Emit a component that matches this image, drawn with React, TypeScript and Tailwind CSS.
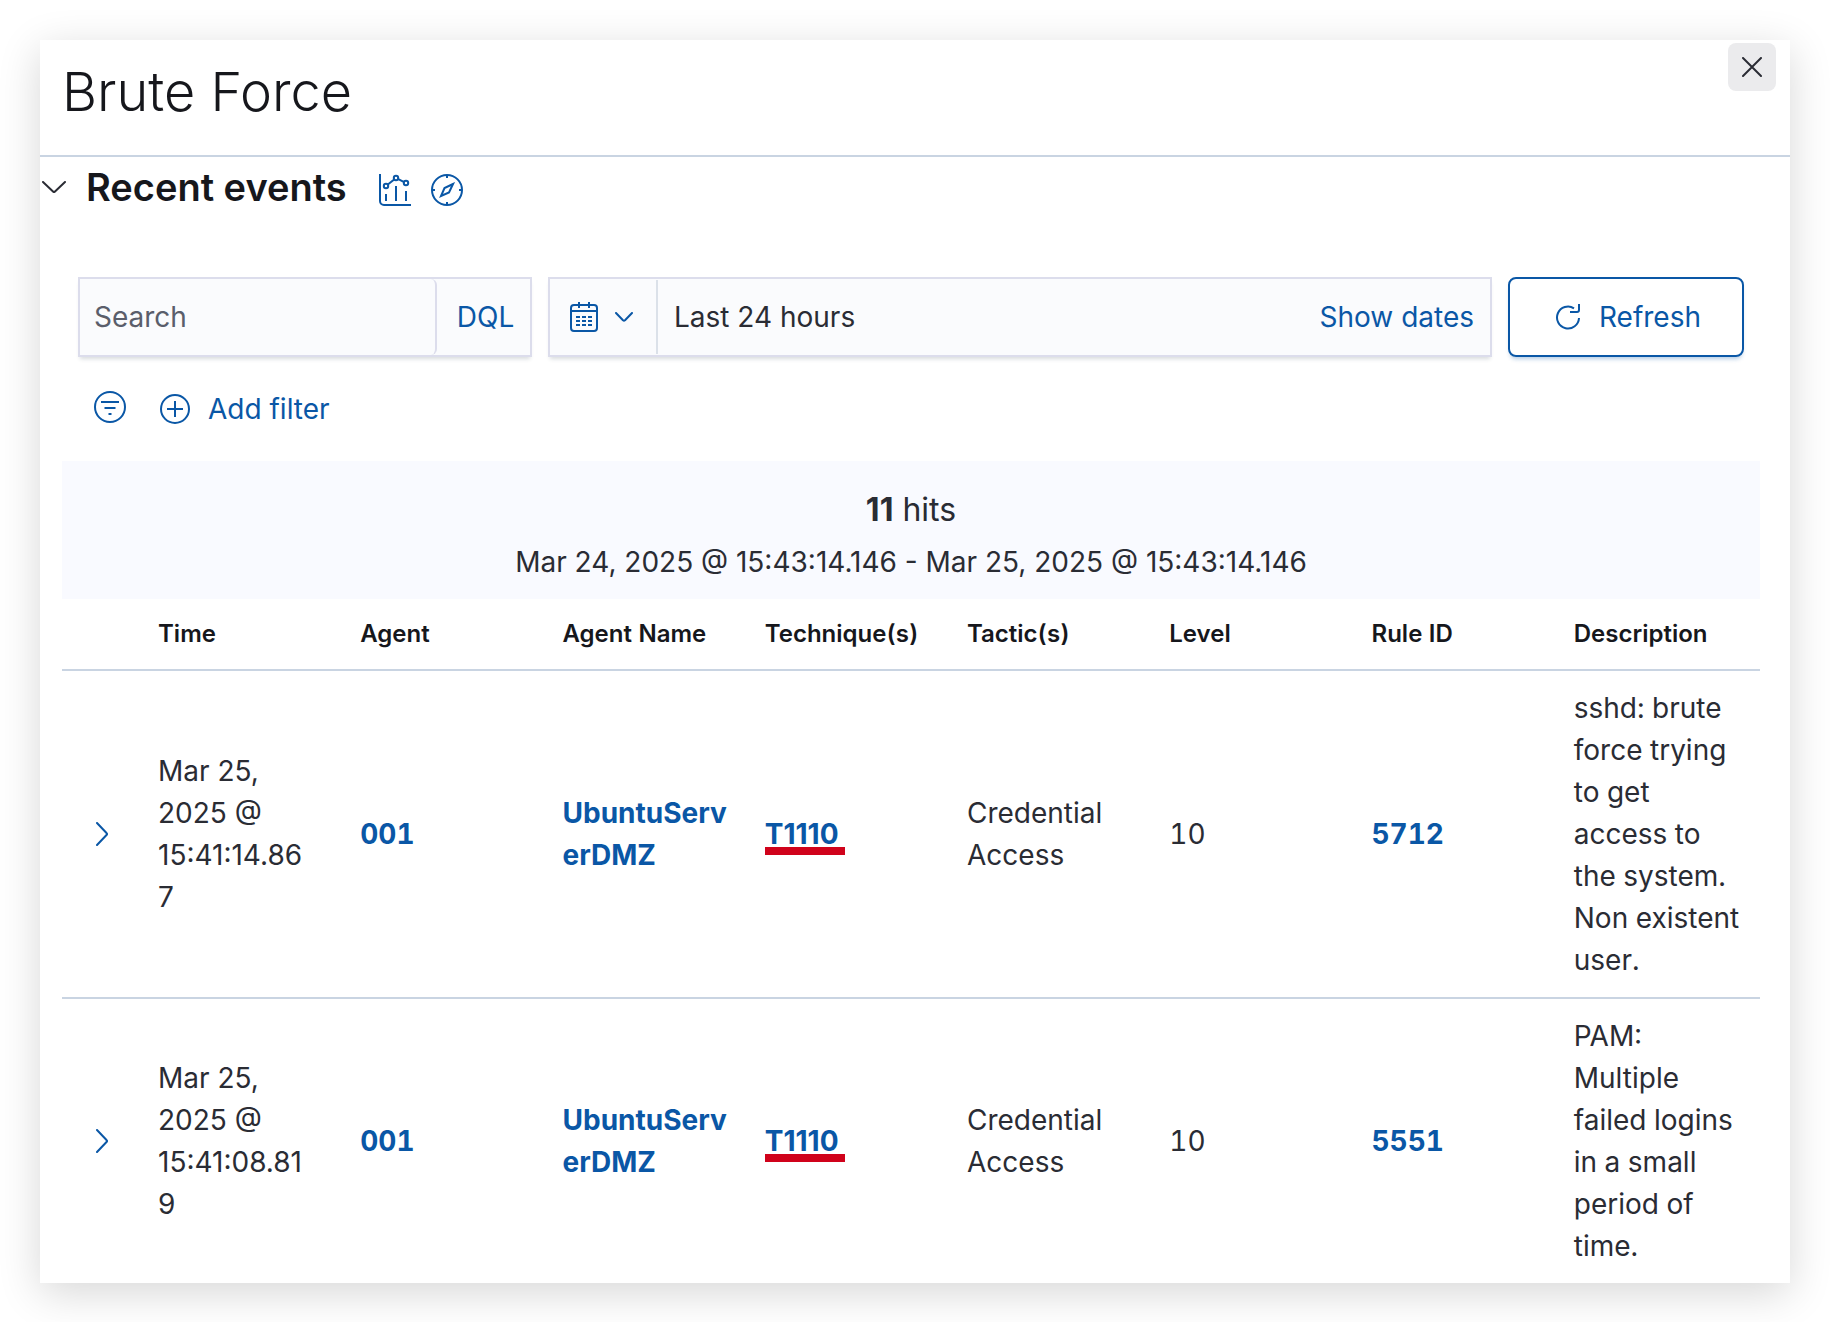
import React from "react";

type IconProps = { className?: string };

const VisualizeIcon = ({ className }: IconProps) => (
  <svg className={className} viewBox="0 0 32 32" fill="none" stroke="currentColor" strokeWidth="2" aria-hidden="true">
    <path d="M1 0v27a4 4 0 0 0 4 4h27" />
    <path d="M7 20v7M17 12v15M27 17v10" />
    <circle cx="7" cy="12" r="2.200" />
    <circle cx="17" cy="4" r="2.200" />
    <circle cx="27" cy="9" r="2.200" />
    <path d="M8.500 10.800l7-5.600M18.800 4.900l6.400 3.200" />
  </svg>
);

const CompassIcon = ({ className }: IconProps) => (
  <svg className={className} viewBox="0 0 32 32" fill="none" stroke="currentColor" strokeWidth="2" aria-hidden="true">
    <circle cx="16" cy="16" r="15" />
    <path d="M16 1v3M16 28v3M1 16h3M28 16h3" />
    <path d="M22 10l-8.500 4L10 22l8-3.500z" />
  </svg>
);

const CalendarIcon = ({ className }: IconProps) => (
  <svg className={className} viewBox="0 0 32 32" fill="none" stroke="currentColor" strokeWidth="2" aria-hidden="true">
    <rect x="3" y="4" width="26" height="26" rx="3" />
    <path d="M3 10h26M11 1v6M21 1v6" />
    <path d="M8 16h4M14 16h4M20 16h4M8 20h4M14 20h4M20 20h4M8 24h4M14 24h4M20 24h4" />
  </svg>
);

const ChevronIcon = ({ className }: IconProps) => (
  <svg className={className} viewBox="0 0 24 12" fill="none" stroke="currentColor" strokeWidth="2" strokeLinecap="round" strokeLinejoin="round" aria-hidden="true">
    <path d="M1 1l10 9.500q1 1 2 0L23 1" />
  </svg>
);

const SmallChevronIcon = ({ className }: IconProps) => (
  <svg className={className} viewBox="0 0 18 10" fill="none" stroke="currentColor" strokeWidth="2" strokeLinecap="round" strokeLinejoin="round" aria-hidden="true">
    <path d="M1 1l7 7.300q1 .8 2 0L17 1" />
  </svg>
);

const RowArrowIcon = ({ className }: IconProps) => (
  <svg className={className} viewBox="0 0 12 24" fill="none" stroke="currentColor" strokeWidth="2" strokeLinecap="round" strokeLinejoin="round" aria-hidden="true">
    <path d="M1 1l9.500 10q1 1 0 2L1 23" />
  </svg>
);

const RefreshIcon = ({ className }: IconProps) => (
  <svg className={className} viewBox="0 0 26 28" fill="none" stroke="currentColor" strokeWidth="2" aria-hidden="true">
    <path d="M19 5.300A11 11 0 1 0 24 15" />
    <path d="M24 1v6a2 2 0 0 1-2 2h-7" />
  </svg>
);

const FilterIcon = ({ className }: IconProps) => (
  <svg className={className} viewBox="0 0 32 32" fill="none" stroke="currentColor" strokeWidth="2" aria-hidden="true">
    <circle cx="16" cy="16" r="15" />
    <path d="M7 11h18M10.500 17h11M14.500 23h3" />
  </svg>
);

const PlusIcon = ({ className }: IconProps) => (
  <svg className={className} viewBox="0 0 30 30" fill="none" stroke="currentColor" strokeWidth="2" aria-hidden="true">
    <circle cx="15" cy="15" r="14" />
    <path d="M15 7v16M7 15h16" />
  </svg>
);

const CloseIcon = ({ className }: IconProps) => (
  <svg className={className} viewBox="0 0 20 20" fill="none" stroke="currentColor" strokeWidth="2" strokeLinecap="round" aria-hidden="true">
    <path d="M1 1l18 18M19 1L1 19" />
  </svg>
);

const columns = ["Time", "Agent", "Agent Name", "Technique(s)", "Tactic(s)", "Level", "Rule ID", "Description"];

const events = [
  {
    time: "Mar 25, 2025 @ 15:41:14.867",
    agent: "001",
    agentName: "UbuntuServerDMZ",
    technique: "T1110",
    tactic: "Credential Access",
    level: 10,
    rule: "5712",
    description: "sshd: brute force trying to get access to the system. Non existent user.",
  },
  {
    time: "Mar 25, 2025 @ 15:41:08.819",
    agent: "001",
    agentName: "UbuntuServerDMZ",
    technique: "T1110",
    tactic: "Credential Access",
    level: 10,
    rule: "5551",
    description: "PAM: Multiple failed logins in a small period of time.",
  },
];

const linkClass = "font-bold text-[#0a57a6]";

export default function App() {
  return (
    <div className="min-h-screen bg-white p-10 font-['Inter',sans-serif] text-[28px] leading-[42px] text-[#2a2c34]">
      <main className="bg-white shadow-[0_10px_40px_rgba(0,0,0,0.16)]">
        <header className="flex items-start justify-between border-b-2 border-[#c9d4e2] pr-3.5 pl-[22px]">
          <h1 className="pt-4 pb-7 text-[54px] leading-[71px] font-light text-[#16171c]">Brute Force</h1>
          <button type="button" aria-label="Close" className="mt-[3px] flex size-12 items-center justify-center rounded-lg bg-[#ebebed]">
            <CloseIcon className="size-5" />
          </button>
        </header>

        <section>
          <div className="flex h-[60px] items-center pl-0.5">
            <button type="button" aria-label="Collapse recent events" className="w-6">
              <ChevronIcon className="h-3 w-6" />
            </button>
            <h2 className="ml-5 text-[38px] leading-[60px] font-semibold text-[#16171c]">Recent events</h2>
            <button type="button" aria-label="Open in visualize" className="mt-1.5 ml-8 text-[#0a57a6]">
              <VisualizeIcon className="size-8" />
            </button>
            <button type="button" aria-label="Open in discover" className="mt-1.5 ml-5 text-[#0a57a6]">
              <CompassIcon className="size-8" />
            </button>
          </div>

          <div className="mt-[60px] flex h-20 gap-4 pr-[46px] pl-[38px]">
            <div className="flex w-[454px] border-2 border-[#dcddec] bg-[#fafbfd] shadow-[0_4px_4px_-2px_rgba(60,80,90,0.2)]">
              <input
                type="text"
                aria-label="Search"
                placeholder="Search"
                className="min-w-0 flex-1 rounded-r-md border-r-2 border-[#dcddec] px-3.5 outline-none placeholder:text-[#5a5e6b]"
              />
              <button type="button" className="w-[93px] pl-1 text-[#0a57a6]">DQL</button>
            </div>
            <div className="flex min-w-0 flex-1 border-2 border-[#dcddec] bg-[#fafbfd] shadow-[0_4px_4px_-2px_rgba(60,80,90,0.2)]">
              <button type="button" aria-label="Date quick select" className="my-px flex w-[108px] items-center gap-[15px] border-r-2 border-[#dbe1e9] pl-[18px] text-[#0a57a6]">
                <CalendarIcon className="size-8" />
                <SmallChevronIcon className="h-2.5 w-[18px]" />
              </button>
              <button type="button" className="flex flex-1 items-center justify-between px-4">
                <span>Last 24 hours</span>
                <span className="text-[#0a57a6]">Show dates</span>
              </button>
            </div>
            <button type="button" className="flex w-[236px] items-center justify-center gap-[18px] rounded-lg border-2 border-[#0a57a6] pl-1 text-[#0a57a6] shadow-[0_4px_4px_-2px_rgba(10,87,166,0.3)]">
              <RefreshIcon className="h-7 w-[26px]" />
              Refresh
            </button>
          </div>

          <div className="flex h-[104px] items-center gap-[34px] pl-[54px] text-[#0a57a6]">
            <button type="button" aria-label="Filter options" className="pb-1">
              <FilterIcon className="size-8" />
            </button>
            <button type="button" className="flex items-center gap-[18px]">
              <PlusIcon className="size-[30px]" />
              Add filter
            </button>
          </div>

          <div className="mr-[30px] ml-[22px]">
            <div className="flex h-[138px] flex-col items-center gap-2.5 bg-[#f9faff] pt-7">
              <p className="text-[32px]"><strong>11</strong> hits</p>
              <p>Mar 24, 2025 @ 15:43:14.146 - Mar 25, 2025 @ 15:43:14.146</p>
            </div>
            <table className="w-full table-fixed border-collapse tabular-nums">
              <thead>
                <tr className="h-[71px] border-b-2 border-[#c9d4e2] text-left text-2xl text-[#16171c]">
                  <td className="w-20" />
                  {columns.map((name) => (
                    <th key={name} scope="col" className="px-4 font-semibold whitespace-nowrap">{name}</th>
                  ))}
                </tr>
              </thead>
              <tbody>
                {events.map((event) => (
                  <tr key={event.rule} className="border-[#c9d4e2] not-last:border-b-2">
                    <td className="pl-[34px]">
                      <button type="button" aria-label="Expand row" className="block text-[#0a57a6]">
                        <RowArrowIcon className="h-6 w-3" />
                      </button>
                    </td>
                    <td className="py-4 pr-8 pl-4 proportional-nums wrap-anywhere">{event.time}</td>
                    <td className="p-4"><a href="#agent" className={linkClass}>{event.agent}</a></td>
                    <td className="p-4 wrap-anywhere"><a href="#agent-name" className={linkClass}>{event.agentName}</a></td>
                    <td className="p-4">
                      <span className="relative inline-block align-top">
                        <a href="#technique" className="font-bold text-[#0a57a6] proportional-nums">{event.technique}</a>
                        <span className="absolute -right-1.5 bottom-0 left-0 h-2 bg-[#d0021b]" />
                      </span>
                    </td>
                    <td className="p-4">{event.tactic}</td>
                    <td className="p-4">{event.level}</td>
                    <td className="p-4"><a href="#rule" className={linkClass}>{event.rule}</a></td>
                    <td className="p-4">{event.description}</td>
                  </tr>
                ))}
              </tbody>
            </table>
          </div>
        </section>
      </main>
    </div>
  );
}
